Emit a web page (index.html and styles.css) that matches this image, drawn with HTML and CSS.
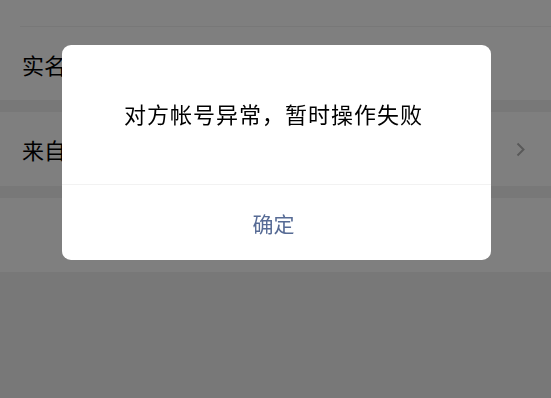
FILE: index.html
```html
<!doctype html>
<html lang="zh-CN">
  <head>
    <meta charset="UTF-8" />
    <meta name="viewport" content="width=device-width, initial-scale=1.0" />
    <title>资料设置</title>
    <link rel="stylesheet" href="styles.css">
  </head>
  <body>
    <div class="page">
      <div class="group">
        <div class="cell cell-top"></div>
        <div class="cell">
          <span class="cell-title">实名</span>
        </div>
      </div>
      <div class="group">
        <div class="cell">
          <span class="cell-title">来自</span>
          <svg class="arrow" width="9" height="15" viewBox="0 0 9 15">
            <path d="M1.5 1.5 L7.5 7.5 L1.5 13.5" fill="none" stroke="#b2b2b2" stroke-width="2" />
          </svg>
        </div>
      </div>
      <div class="group">
        <div class="cell"></div>
      </div>
    </div>

    <div class="mask">
      <div class="dialog">
        <div class="dialog-body">对方帐号异常，暂时操作失败</div>
        <div class="dialog-footer">
          <button type="button" class="dialog-btn">确定</button>
        </div>
      </div>
    </div>
  </body>
</html>
```

FILE: styles.css
```css
body {
  margin: 0;
  padding: 0;
  font-family: "Noto Sans CJK SC", "Noto Sans", sans-serif;
  background-color: #f0f0f0;
  height: 100vh;
  overflow: hidden;
}
.page {
  display: flex;
  flex-direction: column;
  gap: 12px;
}
.group {
  background-color: #ffffff;
}
.cell {
  display: flex;
  align-items: center;
  justify-content: space-between;
  height: 74px;
  padding: 0 26px 0 22px;
  color: #000000;
  font-size: 22px;
}
.cell-top {
  height: 26px;
  border-bottom: 1px solid #f0f0f0;
  margin-left: 20px;
  padding-left: 2px;
}
.group:first-child .cell:last-child {
  height: 73px;
}
.arrow {
  display: block;
}
.mask {
  position: fixed;
  top: 0;
  left: 0;
  right: 0;
  bottom: 0;
  background-color: rgba(0, 0, 0, 0.5);
  display: flex;
  justify-content: center;
  align-items: flex-start;
}
.dialog {
  margin-top: 45px;
  margin-left: 2px;
  width: 429px;
  background-color: #ffffff;
  border-radius: 9px;
  overflow: hidden;
}
.dialog-body {
  height: 139px;
  display: flex;
  align-items: center;
  justify-content: center;
  font-size: 22px;
  letter-spacing: 1px;
  color: #000000;
  padding-bottom: 4px;
  padding-right: 6px;
  box-sizing: border-box;
}
.dialog-footer {
  border-top: 1px solid #f2f2f2;
}
.dialog-btn {
  display: block;
  width: 100%;
  height: 75px;
  border: none;
  background: none;
  font-family: inherit;
  font-size: 21px;
  color: #576b95;
  padding: 0 6px 0 0;
  cursor: pointer;
}
```
